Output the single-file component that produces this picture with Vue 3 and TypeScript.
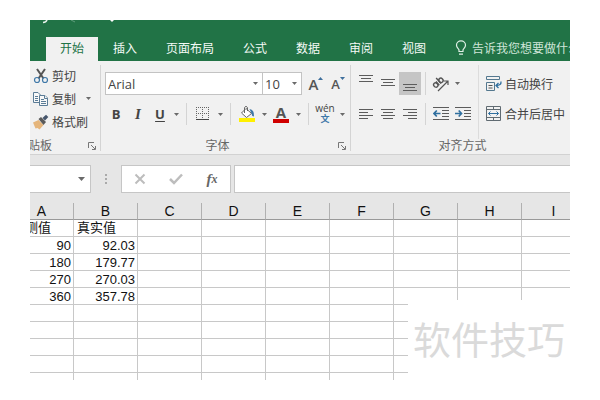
<script setup lang="ts">
import { ref } from 'vue'

const tabs: string[] = ['开始', '插入', '页面布局', '公式', '数据', '审阅', '视图']
const activeTab = ref('开始')

const fontName = ref('Arial')
const fontSize = ref('10')
const nameBox = ref('')
const formula = ref('')

type HAlign = 'left' | 'center' | 'right'
type VAlign = 'top' | 'middle' | 'bottom'
const vAlign = ref<VAlign>('bottom')

const vAligns: { id: VAlign; label: string; y: number }[] = [
  { id: 'top', label: '顶端对齐', y: 3 },
  { id: 'middle', label: '垂直居中', y: 7 },
  { id: 'bottom', label: '底端对齐', y: 12 },
]
const hAligns: { id: HAlign; label: string; path: string }[] = [
  { id: 'left', label: '左对齐', path: 'M4 6.5h14M4 9.5h9M4 12.5h14M4 15.5h9' },
  { id: 'center', label: '居中', path: 'M4 6.5h14M6 9.5h10M4 12.5h14M6 15.5h10' },
  { id: 'right', label: '右对齐', path: 'M4 6.5h14M9 9.5h9M4 12.5h14M9 15.5h9' },
]

const columns: string[] = ['A', 'B', 'C', 'D', 'E', 'F', 'G', 'H', 'I']
const rows: string[][] = [
  ['测值', '真实值'],
  ['90', '92.03'],
  ['180', '179.77'],
  ['270', '270.03'],
  ['360', '357.78'],
  [],
  [],
  [],
  [],
  [],
]
</script>

<template>
  <div class="page">
    <main class="window">
      <header class="top">
        <svg class="quick" width="80" height="4" viewBox="0 0 80 4" aria-hidden="true">
          <path d="M1 2.5Q4 2.5 5 0" fill="none" stroke="#e8f3ec" stroke-width="1.5" />
          <path d="M29 0l4 2" stroke="#5f9d7c" />
          <path d="M68 0h4l-2 2z" fill="#fff" />
        </svg>
        <nav class="tabs">
          <button
            v-for="tab in tabs"
            :key="tab"
            type="button"
            class="tab"
            :class="{ active: tab === activeTab }"
            @click="activeTab = tab"
          >{{ tab }}</button>
          <button type="button" class="tell">
            <svg width="12" height="16" viewBox="0 0 12 16" fill="none" stroke="#dff0e6" stroke-width="1.2" aria-hidden="true">
              <path d="M4 11.5V10C3.5 8.5 1.5 7.5 1.5 5.2a4.5 4.3 0 0 1 9 0C10.5 7.5 8.5 8.5 8 10v1.5zM4 14.2h4" />
            </svg>
            <span>告诉我您想要做什么</span>
          </button>
        </nav>
      </header>

      <section class="ribbon">
        <div class="group clipboard">
          <div class="stack">
            <button type="button" class="command">
              <svg width="16" height="16" viewBox="0 0 16 16" fill="none" aria-hidden="true">
                <path d="M4 1l6.5 9.5M12 1L5.5 10.5" stroke="#555" stroke-width="2" />
                <circle cx="4" cy="12" r="2.5" stroke="#3f78a8" stroke-width="1.2" />
                <circle cx="12" cy="12" r="2.5" stroke="#3f78a8" stroke-width="1.2" />
              </svg>
              <span>剪切</span>
            </button>
            <button type="button" class="command">
              <svg width="16" height="16" viewBox="0 0 16 16" fill="#f8f8f8" stroke="#5b7c96" aria-hidden="true">
                <path d="M.5 1.5H5L7.5 4v7.5h-7z" />
                <path d="M2 5.5h3M2 7.5h3M2 9.5h3" />
                <path d="M6.5 4.5H12l2.5 2.5v7.5h-8z" />
                <path d="M11.5 4.5v3h3M8 8.5h3M8 10.5h5M8 12.5h5" />
              </svg>
              <span>复制</span>
              <svg class="caret" width="5" height="3" viewBox="0 0 5 3" aria-hidden="true"><path d="M0 0h5L2.5 3z" /></svg>
            </button>
            <button type="button" class="command">
              <svg width="16" height="16" viewBox="0 0 16 16" aria-hidden="true">
                <path d="M0 8.5l5.500-2.500L10.500 11l-4 4.500-2-1.500-2 .5z" fill="#e5b57b" />
                <path d="M5.5 5L8 3l5 5-2.500 3z" fill="#5a5a5a" />
                <path d="M9.5 4L13 .8l2.300 2.200L12 6.500z" fill="#46566c" />
              </svg>
              <span>格式刷</span>
            </button>
          </div>
          <footer class="caption start">
            <span>贴板</span>
            <button type="button" class="launcher" aria-label="剪贴板选项">
              <svg width="9" height="9" viewBox="0 0 9 9" fill="none" stroke="#777" aria-hidden="true"><path d="M.5 6V.5H6M3 3l4 4M7.5 4v3.5H4" /></svg>
            </button>
          </footer>
        </div>

        <div class="group font">
          <div class="tools">
            <div class="line">
              <div class="picker family">
                <select v-model="fontName" aria-label="字体">
                  <option>Arial</option>
                  <option>Calibri</option>
                </select>
                <svg class="caret" width="5" height="3" viewBox="0 0 5 3" aria-hidden="true"><path d="M0 0h5L2.5 3z" /></svg>
              </div>
              <div class="picker size">
                <select v-model="fontSize" aria-label="字号">
                  <option>10</option>
                  <option>12</option>
                </select>
                <svg class="caret" width="5" height="3" viewBox="0 0 5 3" aria-hidden="true"><path d="M0 0h5L2.5 3z" /></svg>
              </div>
              <button type="button" class="tool grow" aria-label="增大字号">
                <span class="big">A</span>
                <svg width="5" height="3" viewBox="0 0 5 3" aria-hidden="true"><path d="M0 3h5L2.5 0z" fill="#3f6f9c" /></svg>
              </button>
              <button type="button" class="tool grow" aria-label="减小字号">
                <span class="small">A</span>
                <svg width="5" height="3" viewBox="0 0 5 3" aria-hidden="true"><path d="M0 0h5L2.5 3z" fill="#3f6f9c" /></svg>
              </button>
            </div>
            <div class="line">
              <button type="button" class="tool bold" aria-label="加粗">B</button>
              <button type="button" class="tool italic" aria-label="倾斜">I</button>
              <button type="button" class="tool underline" aria-label="下划线">U</button>
              <button type="button" class="drop" aria-label="下划线样式"><svg class="caret" width="5" height="3" viewBox="0 0 5 3"><path d="M0 0h5L2.5 3z" /></svg></button>
              <i class="rule"></i>
              <button type="button" class="tool wide" aria-label="边框">
                <svg width="14" height="14" viewBox="0 0 14 14" fill="none" stroke="#666" aria-hidden="true">
                  <path d="M0 .5h13M0 6.5h13M.5 0v12M6.5 0v12M12.5 0v12" stroke-dasharray="1 1" />
                  <path d="M0 12.5h13" stroke="#444" />
                </svg>
              </button>
              <button type="button" class="drop" aria-label="边框样式"><svg class="caret" width="5" height="3" viewBox="0 0 5 3"><path d="M0 0h5L2.5 3z" /></svg></button>
              <i class="rule"></i>
              <button type="button" class="tool wide" aria-label="填充颜色">
                <svg width="16" height="18" viewBox="0 0 16 18" aria-hidden="true">
                  <path d="M7 3.5l5.5 5L7.5 12.5 2.5 8z" fill="#fff" stroke="#666" />
                  <path d="M5.5 8V2.500Q7 0 8.500 2.500V6" fill="none" stroke="#666" />
                  <path d="M10.500 4q5 .5 4.500 7.500-2.500-.5-2.500-3z" fill="#3f78a8" />
                  <path d="M0 13h16v4H0z" fill="#fff000" />
                </svg>
              </button>
              <button type="button" class="drop" aria-label="填充颜色选择"><svg class="caret" width="5" height="3" viewBox="0 0 5 3"><path d="M0 0h5L2.5 3z" /></svg></button>
              <button type="button" class="tool wide" aria-label="字体颜色"><span class="ink">A</span></button>
              <button type="button" class="drop" aria-label="字体颜色选择"><svg class="caret" width="5" height="3" viewBox="0 0 5 3"><path d="M0 0h5L2.5 3z" /></svg></button>
              <i class="rule"></i>
              <button type="button" class="tool wide phonetic" aria-label="拼音"><span>wén</span><b>文</b></button>
              <button type="button" class="drop" aria-label="拼音设置"><svg class="caret" width="5" height="3" viewBox="0 0 5 3"><path d="M0 0h5L2.5 3z" /></svg></button>
            </div>
          </div>
          <footer class="caption font-caption">
            <span>字体</span>
            <button type="button" class="launcher" aria-label="字体选项">
              <svg width="9" height="9" viewBox="0 0 9 9" fill="none" stroke="#777" aria-hidden="true"><path d="M.5 6V.5H6M3 3l4 4M7.5 4v3.5H4" /></svg>
            </button>
          </footer>
        </div>

        <div class="group alignment">
          <div class="tools">
            <div class="line">
              <button
                v-for="item in vAligns"
                :key="item.id"
                type="button"
                class="tool"
                :class="{ pressed: item.id === vAlign }"
                :aria-label="item.label"
                @click="vAlign = item.id"
              >
                <svg width="22" height="23" viewBox="0 0 22 23" fill="none" stroke="#5c5c5c" aria-hidden="true">
                  <path :d="`M4 ${item.y + 0.5}h14M6 ${item.y + 3.5}h10M4 ${item.y + 6.5}h14`" />
                </svg>
              </button>
              <i class="rule"></i>
              <button type="button" class="tool" aria-label="方向">
                <svg width="18" height="18" viewBox="0 0 18 18" aria-hidden="true">
                  <g transform="rotate(-42 6 8)" fill="none" stroke="#555" stroke-width="1.4">
                    <ellipse cx="3" cy="8" rx="2" ry="2.3" />
                    <path d="M5.5 5.5v5M8 3v7.5" />
                    <ellipse cx="10" cy="8" rx="2" ry="2.3" />
                  </g>
                  <path d="M6 16L16 6M12 6h4v4" fill="none" stroke="#555" stroke-width="1.2" />
                </svg>
              </button>
              <button type="button" class="drop" aria-label="方向选择"><svg class="caret" width="5" height="3" viewBox="0 0 5 3"><path d="M0 0h5L2.5 3z" /></svg></button>
            </div>
            <div class="line">
              <button v-for="item in hAligns" :key="item.id" type="button" class="tool" :aria-label="item.label">
                <svg width="22" height="22" viewBox="0 0 22 22" fill="none" stroke="#5c5c5c" aria-hidden="true"><path :d="item.path" /></svg>
              </button>
              <i class="rule"></i>
              <button type="button" class="tool" aria-label="减少缩进量">
                <svg width="16" height="14" viewBox="0 0 16 14" fill="none" stroke="#5c5c5c" aria-hidden="true">
                  <path d="M0 .5h16M9 3.5h7M9 6.5h7M9 9.5h7M0 12.5h16" />
                  <path d="M7.5 6.5H1M3.8 3.5L1 6.5l2.8 3" stroke="#2f6f9f" stroke-width="1.7" />
                </svg>
              </button>
              <button type="button" class="tool" aria-label="增加缩进量">
                <svg width="16" height="14" viewBox="0 0 16 14" fill="none" stroke="#5c5c5c" aria-hidden="true">
                  <path d="M0 .5h16M9 3.5h7M9 6.5h7M9 9.5h7M0 12.5h16" />
                  <path d="M0 6.5h6.5M3.7 3.5l2.8 3-2.8 3" stroke="#2f6f9f" stroke-width="1.7" />
                </svg>
              </button>
            </div>
          </div>
          <div class="tools text">
            <button type="button" class="command">
              <svg width="16" height="16" viewBox="0 0 16 16" fill="none" stroke="#54788f" aria-hidden="true">
                <path d="M.5 .5h13v3H.5zM.5 6.5h8v8h-8z" />
                <path d="M2.5 9.500h4M2.500 12h4" stroke="#555" />
                <path d="M13.500 3.500M15 5.500q.5 4-5 4M12.5 7L10 9.5l2.500 2.500" stroke="#2f6f9f" stroke-width="1.3" />
              </svg>
              <span>自动换行</span>
            </button>
            <button type="button" class="command">
              <svg width="16" height="16" viewBox="0 0 16 16" fill="none" stroke="#606b72" aria-hidden="true">
                <path d="M.5.5h14v14H.5zM.5 3.5h14M.5 11.5h14M7.5.5v3M7.5 11.5v3" />
                <path d="M2.5 7.5h10M4.5 5.5l-2 2 2 2M10.5 5.5l2 2-2 2" stroke="#2f6f9f" />
              </svg>
              <span>合并后居中</span>
            </button>
          </div>
          <footer class="caption wide-caption"><span>对齐方式</span></footer>
        </div>
      </section>

      <section class="formula-bar">
        <div class="name-box">
          <input v-model="nameBox" type="text" aria-label="名称框" />
          <svg class="caret" width="7" height="4" viewBox="0 0 7 4" aria-hidden="true"><path d="M0 0h7L3.5 4z" /></svg>
        </div>
        <svg class="grip" width="2" height="11" viewBox="0 0 2 11" fill="#aaa" aria-hidden="true"><path d="M0 0h2v2H0zM0 4h2v2H0zM0 8h2v2H0z" /></svg>
        <div class="entry">
          <button type="button" aria-label="取消">
            <svg width="12" height="12" viewBox="0 0 12 12" fill="none" stroke="#bdbdbd" stroke-width="2"><path d="M1.5 1.5l9 9M10.5 1.5l-9 9" /></svg>
          </button>
          <button type="button" aria-label="输入">
            <svg width="14" height="12" viewBox="0 0 14 12" fill="none" stroke="#bdbdbd" stroke-width="2.5"><path d="M1 6l4 4L13 1.5" /></svg>
          </button>
          <button type="button" class="fx" aria-label="插入函数">f<sub>x</sub></button>
        </div>
        <input v-model="formula" class="formula" type="text" aria-label="编辑栏" />
      </section>

      <div class="sheet">
        <table>
          <thead>
            <tr><th v-for="column in columns" :key="column" scope="col">{{ column }}</th></tr>
          </thead>
          <tbody>
            <tr v-for="(row, r) in rows" :key="r" :class="{ titles: r === 0 }">
              <td v-for="(column, c) in columns" :key="column">{{ row[c] ?? '' }}</td>
            </tr>
          </tbody>
        </table>
      </div>
      <div class="watermark">软件技巧</div>
    </main>
  </div>
</template>

<style>
body {
  margin: 0;
  background: #fff;
}
</style>

<style scoped>
.page {
  box-sizing: border-box;
  height: 100vh;
  padding: 20px 30px;
  font-family: "Noto Sans CJK SC", sans-serif;
  font-size: 12px;
  line-height: 16px;
  color: #444;
}
.window {
  position: relative;
  display: flex;
  flex-direction: column;
  height: 100%;
  overflow: hidden;
}
button {
  display: flex;
  align-items: center;
  justify-content: center;
  margin: 0;
  padding: 0;
  border: 0;
  background: none;
  color: inherit;
  font: inherit;
  white-space: nowrap;
}
button:hover:not(.tab):not(.tell) {
  background: #dcdcdc;
}
svg {
  flex: none;
  display: block;
}
.caret {
  fill: #6a6a6a;
}

.top {
  flex: none;
  background: #217346;
  overflow: hidden;
}
.quick {
  margin-left: 12px;
}
.tabs {
  display: flex;
  gap: 1px;
  height: 24px;
  margin-top: 13px;
  padding-left: 16px;
}
.tab {
  flex: none;
  padding: 0 14px 3px;
  color: #f4faf6;
}
.tab.active {
  background: #f1f1f1;
  color: #217346;
}
.tell {
  flex: none;
  gap: 5px;
  padding: 0 0 2px 14px;
  color: #cfe5d8;
}

.ribbon {
  flex: none;
  display: flex;
  height: 93px;
  border-bottom: 1px solid #d2d2d2;
  background: #f1f1f1;
  overflow: hidden;
}
.group {
  box-sizing: border-box;
  flex: none;
  display: grid;
  grid-template-rows: 1fr 12px;
  margin: 4px 0 3px;
  border-right: 1px solid #d4d4d4;
}
.clipboard {
  width: 71px;
  padding-left: 3px;
}
.stack {
  display: grid;
  grid-template-rows: repeat(3, 23px);
  align-content: start;
  margin-top: -1px;
}
.command {
  justify-content: flex-start;
  gap: 3px;
}
.command .caret {
  margin-left: 7px;
}
.caption {
  display: flex;
  align-items: center;
  justify-content: center;
  position: relative;
  color: #666;
}
.caption.start {
  justify-content: flex-start;
  margin-left: -5px;
}
.font-caption {
  padding-right: 20px;
}
.launcher {
  position: absolute;
  right: 3px;
  bottom: 0;
}
.font {
  width: 250px;
  padding-left: 4px;
}
.tools {
  display: grid;
  grid-template-rows: 23px 22px;
  align-content: start;
  row-gap: 8px;
  padding-top: 7px;
}
.line {
  display: flex;
  align-items: center;
}
.picker {
  box-sizing: border-box;
  display: flex;
  align-items: center;
  height: 23px;
  padding-right: 4px;
  border: 1px solid #c3c3c3;
  background: #fff;
}
.picker select {
  flex: 1;
  min-width: 0;
  height: 21px;
  margin: 0;
  padding: 0 2px;
  border: 0;
  background: none;
  color: #444;
  font: 13px/20px "Open Sans", sans-serif;
  appearance: none;
}
.family {
  width: 158px;
}
.size {
  width: 40px;
  margin: 0 3px 0 -1px;
}
.tool {
  flex: none;
  width: 22px;
  height: 22px;
}
.tool.wide {
  width: 24px;
}
.tool.pressed {
  height: 23px;
  background: #c5c5c5;
}
.drop {
  flex: none;
  width: 10px;
  height: 22px;
}
.rule {
  flex: none;
  align-self: stretch;
  width: 1px;
  margin: 0 4px;
  background: #d4d4d4;
}
.font .rule {
  margin: 0 4px 0 5px;
}
.grow {
  align-items: flex-start;
  font-family: "Open Sans", sans-serif;
  font-weight: 600;
  color: #555;
}
.grow svg {
  margin-top: 4px;
}
.big,
.small {
  align-self: center;
  font-size: 15px;
}
.small {
  font-size: 13px;
}
.bold,
.italic,
.underline {
  font: 700 13px/16px "Open Sans", sans-serif;
}
.italic {
  font-family: "Liberation Serif", serif;
  font-style: italic;
  font-size: 15px;
}
.underline {
  text-decoration: underline;
  text-underline-offset: 2px;
}
.ink {
  width: 16px;
  height: 13px;
  border-bottom: 4px solid #d00000;
  font: 700 15px/13px "Open Sans", sans-serif;
  color: #555;
}
.phonetic {
  flex-direction: column;
  font: 10px/10px "Open Sans", sans-serif;
}
.phonetic b {
  font: 700 9px/12px "Noto Sans CJK SC", sans-serif;
  color: #3f78a8;
}

.alignment {
  flex: 1;
  min-width: 0;
  grid-template-columns: 124px 1fr;
  padding-left: 4px;
  border-right: 0;
}
.alignment > .tools:first-child {
  border-right: 1px solid #dcdcdc;
}
.text {
  padding-left: 7px;
  min-width: 0;
}
.wide-caption {
  grid-column: 1 / -1;
}

.formula-bar {
  flex: none;
  box-sizing: border-box;
  display: flex;
  align-items: center;
  height: 48px;
  background: #e6e6e6;
}
.name-box,
.entry,
.formula {
  box-sizing: border-box;
  height: 28px;
  border: 1px solid #c6c6c6;
  background: #fff;
}
.name-box {
  display: flex;
  align-items: center;
  width: 61px;
  padding-right: 5px;
  border-left: 0;
}
.name-box input {
  flex: 1;
  min-width: 0;
  padding: 0 4px;
  border: 0;
  background: none;
}
.grip {
  margin: 0 14px;
}
.entry {
  display: grid;
  grid-template-columns: repeat(3, 36px);
  width: 110px;
}
.fx {
  font: italic 700 15px/20px "Liberation Serif", serif;
  color: #666;
}
.fx sub {
  font-size: 12px;
  line-height: 12px;
}
.formula {
  flex: 1;
  min-width: 0;
  margin-left: 3px;
  padding: 0 4px;
  border-right: 0;
}

.sheet {
  flex: 1;
  min-height: 0;
  overflow: hidden;
}
table {
  width: 576px;
  margin-left: -20px;
  table-layout: fixed;
  border-collapse: separate;
  border-spacing: 0;
  font: 13px/16px "Liberation Sans", "Noto Sans CJK SC", sans-serif;
  color: #111;
}
th,
td {
  box-sizing: border-box;
  height: 17px;
  padding: 0 2px;
  border-right: 1px solid #c8c8c8;
  border-bottom: 1px solid #c8c8c8;
  text-align: right;
  white-space: nowrap;
}
td {
  padding-top: 2px;
  line-height: 14px;
}
th {
  border-right-color: #b0b0b0;
  border-bottom-color: #999;
  background: #e6e6e6;
  font-size: 14px;
  font-weight: 400;
  text-align: center;
}
.titles td {
  padding-top: 0;
  padding-left: 3px;
  line-height: 16px;
  text-align: left;
}
.titles td:first-child {
  padding-left: 15px;
}
.watermark {
  position: absolute;
  right: 0;
  bottom: 0;
  box-sizing: border-box;
  width: 162px;
  height: 80px;
  padding-left: 5px;
  background: #fff;
  color: #dadada;
  font-size: 38px;
  line-height: 76px;
  white-space: nowrap;
}
</style>
